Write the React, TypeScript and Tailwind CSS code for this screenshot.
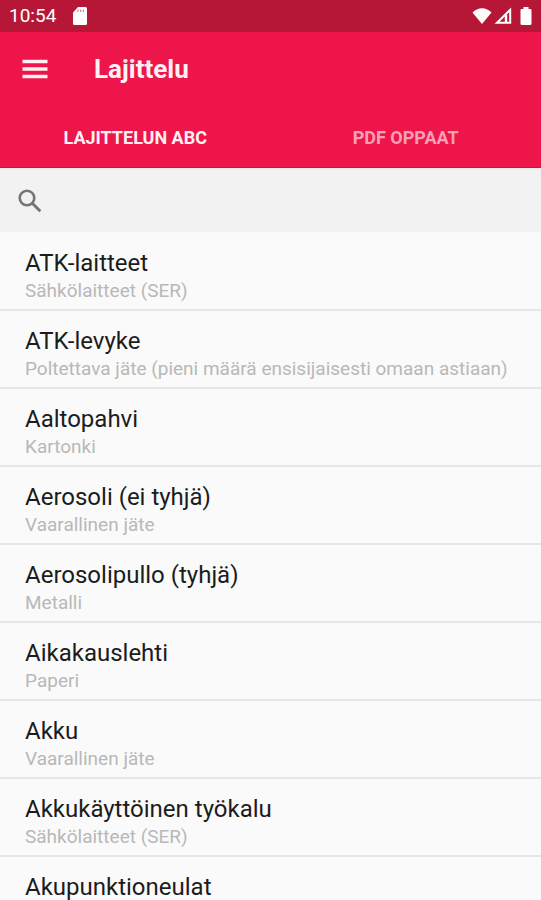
import { useState } from "react";
import clsx from "clsx";

type WasteItem = { name: string; sorting: string };

const ITEMS: WasteItem[] = [
  { name: "ATK-laitteet", sorting: "Sähkölaitteet (SER)" },
  { name: "ATK-levyke", sorting: "Poltettava jäte (pieni määrä ensisijaisesti omaan astiaan)" },
  { name: "Aaltopahvi", sorting: "Kartonki" },
  { name: "Aerosoli (ei tyhjä)", sorting: "Vaarallinen jäte" },
  { name: "Aerosolipullo (tyhjä)", sorting: "Metalli" },
  { name: "Aikakauslehti", sorting: "Paperi" },
  { name: "Akku", sorting: "Vaarallinen jäte" },
  { name: "Akkukäyttöinen työkalu", sorting: "Sähkölaitteet (SER)" },
  { name: "Akupunktioneulat", sorting: "" },
];

const TABS = ["LAJITTELUN ABC", "PDF OPPAAT"];

function StatusBar() {
  return (
    <div className="flex h-8 shrink-0 items-center bg-[#b71737] pl-[9px] pr-[9px] text-white">
      <span className="text-[19px] leading-6">10:54</span>
      <svg viewBox="0 0 16 20" className="ml-4 h-5 w-4" fill="currentColor">
        <path d="M6 1h7.500a1.500 1.500 0 0 1 1.500 1.500v15a1.500 1.500 0 0 1-1.500 1.500h-11A1.500 1.500 0 0 1 1 17.500V6.500z" />
        <path d="M6 3.500v2.500M8.700 3.500v2.500M11.400 3.500v2.500" stroke="#d9808f" strokeWidth="1.200" />
      </svg>
      <div className="ml-auto flex items-center">
        <svg viewBox="0 0 20 18" className="h-[18px] w-5" fill="currentColor">
          <path d="M10 17 0.500 5.500C3 2.800 6.300 1.200 10 1.200s7 1.600 9.500 4.300z" />
        </svg>
        <svg viewBox="0 0 18 18" className="ml-[2px] h-[18px] w-[18px]" fill="none" stroke="currentColor">
          <path d="M16.200 2.800v13H3z" strokeWidth="2" />
          <path d="M12 8v8" strokeWidth="2.400" />
        </svg>
        <svg viewBox="0 0 12 20" className="ml-2 h-5 w-3" fill="currentColor">
          <path d="M3.500 1h5v2h1.700A1.300 1.300 0 0 1 11.500 4.300v13.400a1.300 1.300 0 0 1-1.300 1.300H1.800A1.300 1.300 0 0 1 0.500 17.700V4.300A1.300 1.300 0 0 1 1.800 3h1.700z" />
        </svg>
      </div>
    </div>
  );
}

function ItemRow({ item }: { item: WasteItem }) {
  return (
    <li className="h-[78px] border-b-2 border-[#e6e6e6] px-[25px] pt-4">
      <h2 className="text-[24px] leading-7 text-[#1c1c1c]">{item.name}</h2>
      <p className="whitespace-nowrap text-[19px] leading-7 text-[#b8b8b8]">{item.sorting}</p>
    </li>
  );
}

export default function App() {
  const [tab, setTab] = useState(TABS[0]);
  const [query, setQuery] = useState("");
  const visible = ITEMS.filter((item) => item.name.toLowerCase().includes(query.toLowerCase()));

  return (
    <div className="flex h-screen flex-col overflow-hidden bg-[#fafafa] font-['Roboto',sans-serif]">
      <StatusBar />
      <header className="shrink-0 bg-[#ed1549] text-[#fff0f3]">
        <div className="flex h-[74px] items-center pl-[22px]">
          <button type="button" aria-label="Valikko">
            <svg viewBox="0 0 26 20" className="h-5 w-[26px]" stroke="currentColor" strokeWidth="3.400">
              <path d="M0.500 2.500h25M0.500 10h25M0.500 17.500h25" />
            </svg>
          </button>
          <h1 className="ml-[46px] text-[26px] leading-8 font-bold">Lajittelu</h1>
        </div>
        <nav className="grid h-[62px] grid-cols-2 border-b border-[#e30642]">
          {TABS.map((label) => (
            <button
              key={label}
              type="button"
              onClick={() => setTab(label)}
              className={clsx(
                "pt-[2px] text-[18px] leading-6 font-bold",
                label === tab ? "text-[#fff0f3]" : "text-[#f9a0b4]"
              )}
            >
              {label}
            </button>
          ))}
        </nav>
      </header>
      <div className="flex h-16 shrink-0 items-center gap-4 border-t-2 border-[#ebebeb] bg-[#f2f2f2] px-[18px]">
        <svg viewBox="0 0 24 24" className="h-6 w-6 shrink-0" fill="none" stroke="#757575">
          <circle cx="9" cy="9" r="7.300" strokeWidth="2.600" />
          <path d="M14.300 14.300 22.300 22.300" strokeWidth="3" />
        </svg>
        <input
          type="search"
          aria-label="Haku"
          value={query}
          onChange={(e) => setQuery(e.target.value)}
          className="h-10 min-w-0 flex-1 bg-transparent text-[18px] text-[#1c1c1c] outline-none"
        />
      </div>
      <ul className="min-h-0 flex-1 overflow-y-auto pt-px [scrollbar-width:none]">
        {visible.map((item) => (
          <ItemRow key={item.name} item={item} />
        ))}
      </ul>
    </div>
  );
}
